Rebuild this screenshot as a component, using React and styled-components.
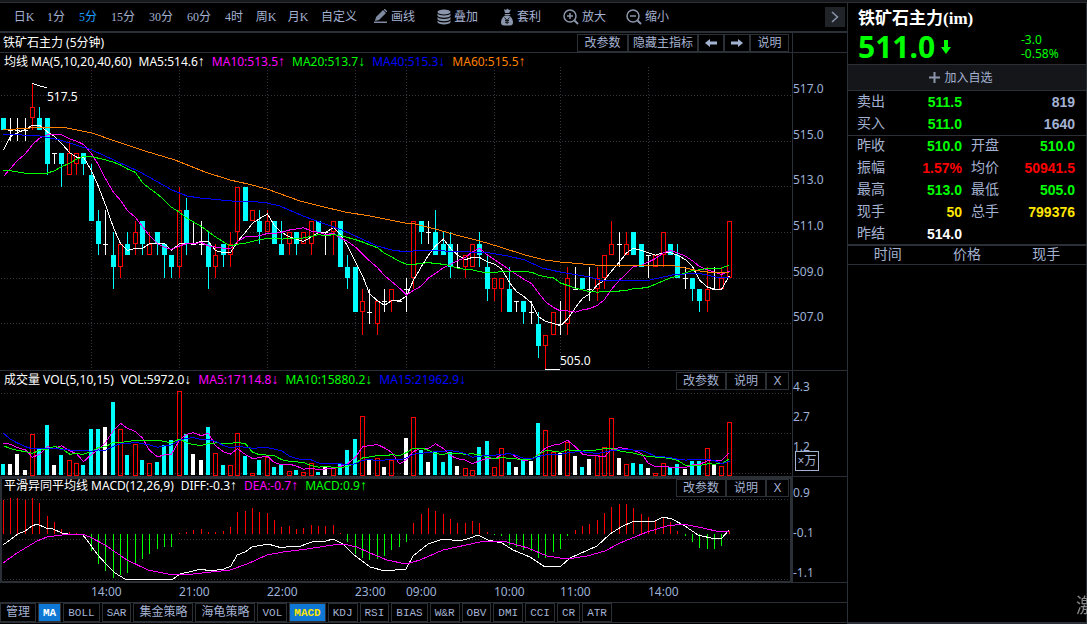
import React from "react";
import styled, { createGlobalStyle } from "styled-components";

const LINE = "#2b3037";
const TEXT = "#a4b2d2";
const UP = "#ff0000";
const DOWN = "#00ffff";
const COLORS = { r: UP, c: DOWN, w: "#ffffff" };

const periods = ["日K", "1分", "5分", "15分", "30分", "60分", "4时", "周K", "月K", "自定义"];
const tabs = ["管理", "MA", "BOLL", "SAR", "集金策略", "海龟策略", "VOL", "MACD", "KDJ", "RSI", "BIAS", "W&R", "OBV", "DMI", "CCI", "CR", "ATR"];

const times = [
    [91, "14:00"], [179, "21:00"], [267, "22:00"], [355, "23:00"],
    [406, "09:00"], [494, "10:00"], [560, "11:00"], [648, "14:00"],
];

// type, high, body top, body bottom, low - in ticks of 0.5 below 517.5
const candles = [
    ["c", 3, 3, 4, 4], ["w", 3, 4, 4, 5], ["w", 3, 4, 4, 5], ["w", 3, 4, 4, 5], ["r", 0, 2, 3, 4],
    ["c", 2, 3, 4, 4], ["c", 3, 3, 7, 8], ["w", 6, 6, 6, 7], ["c", 6, 6, 7, 9], ["r", 5, 6, 8, 8],
    ["r", 6, 6, 7, 8], ["c", 6, 6, 7, 8], ["c", 7, 8, 12, 12], ["c", 11, 12, 14, 15], ["w", 11, 14, 14, 15],
    ["c", 13, 15, 16, 18], ["r", 14, 14, 16, 17], ["c", 13, 14, 15, 15], ["r", 12, 13, 14, 15], ["c", 12, 12, 14, 15],
    ["r", 13, 14, 15, 15], ["c", 13, 13, 14, 15], ["c", 14, 14, 15, 17], ["c", 15, 15, 16, 17], ["r", 9, 11, 16, 17],
    ["c", 10, 11, 14, 15], ["w", 12, 14, 14, 14], ["w", 12, 14, 14, 15], ["c", 13, 14, 16, 18], ["r", 14, 15, 16, 17],
    ["c", 14, 14, 15, 16], ["r", 13, 14, 15, 16], ["r", 9, 9, 13, 14], ["c", 9, 9, 12, 12], ["r", 11, 11, 12, 12],
    ["c", 11, 12, 13, 14], ["r", 11, 12, 13, 13], ["c", 12, 12, 14, 14], ["c", 12, 14, 15, 15], ["r", 13, 13, 14, 15],
    ["c", 13, 13, 14, 15], ["r", 13, 13, 14, 14], ["r", 12, 12, 14, 15], ["c", 12, 12, 13, 13], ["w", 13, 13, 13, 15],
    ["r", 12, 12, 13, 15], ["c", 12, 12, 16, 16], ["c", 15, 16, 17, 18], ["c", 16, 16, 20, 20], ["r", 18, 19, 20, 22],
    ["w", 18, 20, 20, 21], ["r", 19, 19, 21, 22], ["w", 18, 19, 19, 20], ["r", 18, 18, 19, 20], ["w", 19, 19, 19, 19],
    ["w", 17, 18, 18, 20], ["r", 12, 12, 17, 18], ["c", 12, 12, 13, 14], ["w", 12, 13, 13, 14], ["c", 11, 13, 15, 15],
    ["c", 13, 14, 15, 15], ["c", 13, 14, 16, 17], ["w", 14, 16, 16, 16], ["r", 15, 15, 16, 17], ["r", 14, 14, 16, 16],
    ["c", 13, 14, 15, 16], ["c", 15, 16, 18, 19], ["r", 17, 17, 18, 19], ["r", 17, 17, 18, 20], ["c", 16, 18, 20, 20],
    ["w", 19, 19, 19, 20], ["c", 19, 19, 20, 21], ["w", 19, 20, 20, 21], ["c", 20, 21, 23, 24], ["r", 22, 22, 23, 25],
    ["r", 20, 20, 22, 22], ["w", 19, 21, 21, 22], ["r", 16, 17, 21, 22], ["w", 16, 18, 18, 18], ["c", 17, 17, 18, 18],
    ["w", 16, 18, 18, 19], ["r", 16, 17, 18, 19], ["r", 15, 15, 17, 18], ["r", 12, 14, 15, 15], ["w", 13, 14, 14, 16],
    ["r", 13, 14, 15, 15], ["c", 13, 13, 15, 15], ["c", 14, 14, 16, 16], ["w", 15, 15, 15, 17], ["r", 15, 15, 16, 16],
    ["r", 13, 13, 15, 16], ["c", 14, 14, 15, 15], ["c", 14, 15, 17, 17], ["w", 16, 17, 17, 18], ["c", 17, 17, 18, 19],
    ["c", 18, 18, 19, 20], ["r", 16, 18, 19, 20], ["w", 16, 18, 18, 18], ["r", 16, 17, 18, 18], ["r", 12, 12, 17, 17],
];

const volumes = [
    33, 33, 63, 15, 122, 78, 150, 30, 60, 45, 35, 30, 138, 138, 144, 219, 137, 60, 93, 45,
    35, 39, 90, 105, 253, 123, 63, 45, 144, 65, 30, 29, 125, 57, 5, 45, 53, 24, 30, 11,
    15, 8, 35, 9, 24, 25, 36, 75, 108, 176, 47, 50, 24, 45, 0, 111, 173, 75, 39, 69,
    39, 69, 27, 20, 14, 84, 102, 23, 80, 39, 24, 48, 42, 156, 134, 68, 66, 98, 57, 24,
    48, 59, 83, 170, 51, 32, 36, 33, 21, 5, 35, 23, 33, 18, 42, 42, 80, 30, 26, 158,
];

const macd = [
    103, 109, 109, 103, 109, 94, 55, 37, 16, 7, 4, -8, -50, -90, -110, -131, -122, -116, -90, -74,
    -60, -44, -38, -38, 1, 7, 13, 16, 7, 7, 10, 22, 67, 70, 79, 67, 64, 43, 22, 25,
    16, 19, 28, 25, 25, 28, 1, -23, -59, -71, -78, -74, -65, -47, -38, -23, 34, 61, 79, 70,
    61, 46, 34, 34, 40, 34, 7, -2, -5, -32, -38, -47, -50, -71, -71, -53, -44, -5, 13, 25,
    31, 43, 64, 82, 91, 91, 79, 61, 52, 43, 52, 37, 10, -5, -23, -41, -44, -44, -35, 10,
];

const ma40 = "3,134 40,136 60,140 92,150 140,172 172,190 187,196 200,198 232,201 248,201 267,203 280,206 303,216 325,224 342,230 362,239 377,246 392,250 407,252 420,250 445,251 470,252 490,253 508,256 525,260 542,268 560,272 590,277 600,280 625,281 650,280 672,275 698,273 720,278 729,277";
const ma60 = "3,130 30,128 62,127 92,133 115,141 145,151 175,160 205,172 230,180 248,184 267,189 300,201 320,206 345,212 370,216 395,221 405,223 415,224 435,229 460,236 480,241 500,247 525,255 545,260 560,262 595,265 620,265 650,266 670,265 685,268 700,271 715,273 729,272";
const diff = "3,545 18,534 25,531 32,526 37,524 46,528 53,529 62,533 68,534 82,534 87,540 97,554 106,564 115,573 125,579 173,579 180,574 193,571 201,569 210,571 224,569 231,566 237,555 245,552 252,547 268,544 282,548 290,546 298,547 312,542 326,541 333,539 343,544 353,554 370,567 385,571 406,569 413,556 428,544 443,539 460,541 470,538 478,535 488,540 502,543 513,550 530,557 545,567 561,566 570,558 597,546 610,534 621,527 632,522 655,521 663,517 672,519 685,526 698,535 715,539 722,538 729,530";
const dea = "3,563 17,553 37,541 47,537 62,535 82,534 90,537 105,545 127,560 148,570 173,575 193,574 230,570 247,564 267,555 283,552 307,549 333,545 343,544 357,547 370,553 387,560 406,564 420,560 443,550 480,542 503,541 528,548 547,556 567,559 587,556 605,551 620,543 647,532 667,526 683,524 703,528 720,532 729,531";

const barX = (i) => Math.floor(3.3 + (726 / 99) * i);
const tickY = (k) => Math.round(84.1 + 11.4 * k);

// seed holds the averages of the bars which reach back before the first one
function average(values, n, seed) {
    return values.map((v, i) => {
        if (i < n - 1) return seed[i];
        return values.slice(i - n + 1, i + 1).reduce((a, b) => a + b, 0) / n;
    });
}

function toPoints(values, scale) {
    return values.map((v, i) => `${barX(i) + 0.5},${scale(v)}`).join(" ");
}

const closes = candles.map(([type, , top, bottom]) => (type === "r" ? top : bottom));
const priceY = (k) => 84.1 + 11.4 * k;
const volumeY = (v) => 475 - v / 3;

const priceLines = [
    ["#ffffff", toPoints(average(closes, 5, [5.8, 4.6, 4.26, 3.97]), priceY)],
    ["#ff00ff", toPoints(average(closes, 10, [8.1, 7.4, 6.7, 6.1, 5.3, 4.75, 4.45, 4.4, 4.45]), priceY)],
    ["#00ff00", toPoints(average(closes, 20, [7.55, 7.6, 7.7, 7.82, 7.82, 7.82, 7.8, 7.6, 7.25, 6.95, 6.6, 6.35, 6.37, 6.5, 6.65, 6.85, 7.1, 7.45, 7.75]), priceY)],
    ["#0000ff", ma40],
    ["#ff8000", ma60],
];

const volumeLines = [
    ["#ff00ff", toPoints(average(volumes, 5, [96, 92, 82, 75]), volumeY)],
    ["#00ff00", toPoints(average(volumes, 10, [88, 79, 74, 70, 65, 74, 78, 86, 80]), volumeY)],
    ["#0000ff", toPoints(average(volumes, 15, [125, 107, 96, 85, 78, 79, 80, 80, 77, 75, 74, 74, 71, 75]), volumeY)],
];

const quotes = [
    [["卖出", "511.5", "#00ff00"], ["", "819", TEXT]],
    [["买入", "511.0", "#00ff00"], ["", "1640", TEXT]],
    [["昨收", "510.0", "#00ff00"], ["开盘", "510.0", "#00ff00"]],
    [["振幅", "1.57%", "#ff0000"], ["均价", "50941.5", "#ff0000"]],
    [["最高", "513.0", "#00ff00"], ["最低", "505.0", "#00ff00"]],
    [["现手", "50", "#ffe600"], ["总手", "799376", "#ffe600"]],
    [["昨结", "514.0", "#ffffff"], ["", "", TEXT]],
];

function Lines({ lines }) {
    return lines.map(([color, points]) => (
        <polyline key={color} points={points} fill="none" stroke={color} />
    ));
}

function GridRows({ rows }) {
    return rows.map((y) => (
        <line key={y} x1="1" x2="100%" y1={y + 0.5} y2={y + 0.5} stroke="#34343c" strokeDasharray="1 2" />
    ));
}

function Candle({ index, data }) {
    const [type, high, top, bottom, low] = data;
    const x = barX(index);
    const color = COLORS[type];
    const t = tickY(top);
    const b = tickY(bottom);

    return (
        <g stroke={color} fill="none">
            <path d={`M${x + 0.5} ${tickY(high)}V${t}M${x + 0.5} ${b}V${tickY(low)}`} />
            {type === "r" && <rect x={x - 1.5} y={t + 0.5} width="4" height={b - t - 1} />}
            {type === "c" && <rect x={x - 2} y={t} width="5" height={b - t} fill={color} stroke="none" />}
            {type === "w" && <path d={`M${x - 2} ${t + 0.5}h5`} />}
        </g>
    );
}

function PriceChart() {
    return (
        <Plot $height={301} shapeRendering="crispEdges">
            <g transform="translate(0 -69)">
                <GridRows rows={[95, 141, 186, 232, 278, 323]} />
                {times.map(([x]) => (
                    <line key={x} x1={x + 0.5} x2={x + 0.5} y1="67" y2="370" stroke="#34343c" strokeDasharray="1 2" />
                ))}
                {candles.map((data, i) => <Candle key={i} index={i} data={data} />)}
                <Lines lines={priceLines} />
                <path d="M32 83.5L47 88M545 369.5h15" stroke="#ffffff" fill="none" />
                <Mark x="47" y="101">517.5</Mark>
                <Mark x="560" y="365">505.0</Mark>
            </g>
        </Plot>
    );
}

function VolumeChart() {
    return (
        <Plot $height={86} shapeRendering="crispEdges">
            <g transform="translate(0 -390)">
                <GridRows rows={[393, 433, 473]} />
                {volumes.map((v, i) => {
                    const type = candles[i][0];
                    const h = Math.round(v / 3);
                    if (type === "r") {
                        return <rect key={i} x={barX(i) - 1.5} y={475.5 - h} width="4" height={h} fill="none" stroke={UP} />;
                    }
                    return <rect key={i} x={barX(i) - 2} y={475 - h} width="4" height={h} fill={COLORS[type]} />;
                })}
                <Lines lines={volumeLines} />
            </g>
        </Plot>
    );
}

function MacdChart() {
    return (
        <Plot $height={83} shapeRendering="crispEdges">
            <g transform="translate(0 -497)">
                <GridRows rows={[499, 539, 579]} />
                {macd.map((v, i) => (
                    <path key={i} d={`M${barX(i) + 0.5} 533.5v${Math.round(-v / 3) || -1}`} stroke={v > 0 ? UP : "#00ff00"} />
                ))}
                <Lines lines={[["#ffffff", diff], ["#ff00ff", dea]]} />
            </g>
        </Plot>
    );
}

function Axis({ height, labels }) {
    return (
        <Plot $height={height}>
            {labels.map(([y, label]) => <AxisText key={label} x="0" y={y}>{label}</AxisText>)}
        </Plot>
    );
}

function Legend({ items }) {
    return (
        <LegendRow>
            {items.map(([text, color, arrow]) => (
                <LegendItem key={text} $color={color}>{text}{arrow && <Arrow>{arrow}</Arrow>}</LegendItem>
            ))}
        </LegendRow>
    );
}

function PaneButtons() {
    return (
        <ButtonGroup>
            <SmallButton $width={50}>改参数</SmallButton>
            <SmallButton $width={40}>说明</SmallButton>
            <SmallButton $width={23}>X</SmallButton>
        </ButtonGroup>
    );
}

function PencilIcon() {
    return (
        <svg width="14" height="16" viewBox="0 0 14 16" fill="#7f899f">
            <path d="M1 12l1-4 7-7 3 3-7 7zM10 0l1 0 2 2v1l-1 0-2-2z" />
            <path d="M0 12.500h13v1.500H0z" />
        </svg>
    );
}

function StackIcon() {
    return (
        <svg width="14" height="16" viewBox="0 0 14 16" fill="#8b95ab">
            <ellipse cx="7" cy="3" rx="6.500" ry="2.500" />
            <path d="M.5 4.500c1 2.500 12 2.500 13 0v2.300c-1 2.500-12 2.500-13 0zM.5 8c1 2.500 12 2.500 13 0v2.300c-1 2.500-12 2.500-13 0zM.5 11.500c1 2.500 12 2.500 13 0v1.800c-1 2.800-12 2.800-13 0z" />
        </svg>
    );
}

function BagIcon() {
    return (
        <svg width="14" height="18" viewBox="0 0 14 18" fill="#8b95ab">
            <path d="M4 1l2 1 1.500-1.500L9 2l2-.5L9 5H5zM5 6h5l.5 1H4.500zM5 7.500h4c3 2 4 4.500 4 7 0 2-1 3-3 3H4c-2 0-3-1-3-3 0-2.500 1-5 4-7z" />
            <path d="M4.500 9.500L7 12.500l2.500-3M7 12.500V16M5 12.500h4M5 14.300h4" stroke="#101318" fill="none" />
        </svg>
    );
}

function ZoomIcon({ plus }) {
    return (
        <svg width="16" height="16" viewBox="0 0 16 16" fill="none" stroke="#8b95ab" strokeWidth="1.500">
            <circle cx="7" cy="7" r="6" />
            <path d="M11.500 11.500L15 15" strokeWidth="2" />
            <path d={plus ? "M4 7h6M7 4v6" : "M4 7h6"} />
        </svg>
    );
}

function MoveIcon({ right }) {
    return (
        <svg width="12" height="8" viewBox="0 0 12 8" fill={TEXT}>
            <path d={right ? "M12 4L7 0v2.500H0v3h7V8z" : "M0 4l5-4v2.500h7v3H5V8z"} />
        </svg>
    );
}

const tools = [
    ["画线", <PencilIcon />], ["叠加", <StackIcon />], ["套利", <BagIcon />],
    ["放大", <ZoomIcon plus />], ["缩小", <ZoomIcon />],
];

function Toolbar() {
    return (
        <ToolbarRow>
            {periods.map((name) => (
                <PeriodButton key={name} $width={name === "自定义" ? 50 : 26 + 6 * (name.length - 1)} $active={name === "5分"}>
                    {name}
                </PeriodButton>
            ))}
            <Tools>
                {tools.map(([name, icon]) => (
                    <ToolButton key={name}>{icon}{name}</ToolButton>
                ))}
            </Tools>
            <MoreButton aria-label="更多">
                <svg width="8" height="12" viewBox="0 0 8 12" fill="none" stroke="#8b95ab" strokeWidth="1.500">
                    <path d="M1 1l5.500 5L1 11" />
                </svg>
            </MoreButton>
        </ToolbarRow>
    );
}

function QuotePanel() {
    return (
        <Side>
            <Summary>
                <Name>铁矿石主力(im)</Name>
                <PriceRow>
                    <Price>511.0</Price>
                    <svg width="10" height="14" viewBox="0 0 10 14" fill="#00ff00">
                        <path d="M3 0h4v7h3l-5 7-5-7h3z" />
                    </svg>
                    <Change>
                        <span>-3.0</span>
                        <span>-0.58%</span>
                    </Change>
                </PriceRow>
            </Summary>
            <AddButton>
                <svg width="11" height="11" viewBox="0 0 11 11" stroke="#8b95ab" strokeWidth="2">
                    <path d="M5.500 0v11M0 5.500h11" />
                </svg>
                加入自选
            </AddButton>
            <QuoteTable>
                <colgroup>
                    <LabelCol />
                    <ValueCol />
                    <LabelCol />
                    <col />
                </colgroup>
                <tbody>
                    {quotes.map(([left, right], i) => (
                        <QuoteRow key={left[0]} $line={i === 2}>
                            <Label scope="row">{left[0]}</Label>
                            <Value $color={left[2]}>{left[1]}</Value>
                            <Label as={right[0] ? "th" : "td"}>{right[0]}</Label>
                            <Value $color={right[2]}>{right[1]}</Value>
                        </QuoteRow>
                    ))}
                </tbody>
            </QuoteTable>
            <TradeTable>
                <thead>
                    <tr><th>时间</th><th>价格</th><th>现手</th></tr>
                </thead>
            </TradeTable>
        </Side>
    );
}

function App() {
    return (
        <Page>
            <GlobalStyle />
            <TopStrip />
            <Main>
                <Toolbar />
                <Charts>
                    <TitleRow>
                        <Title>铁矿石主力 (5分钟)</Title>
                        <ButtonGroup>
                            <SmallButton $width={51}>改参数</SmallButton>
                            <SmallButton $width={70}>隐藏主指标</SmallButton>
                            <SmallButton $width={26} aria-label="左移"><MoveIcon /></SmallButton>
                            <SmallButton $width={26} aria-label="右移"><MoveIcon right /></SmallButton>
                            <SmallButton $width={39}>说明</SmallButton>
                        </ButtonGroup>
                    </TitleRow>
                    <AxisCell />

                    <Pane>
                        <PaneHeader $height={16}>
                            <Legend items={[
                                ["均线 MA(5,10,20,40,60)", "#ffffff"],
                                ["MA5:514.6", "#ffffff", "↑"],
                                ["MA10:513.5", "#ff00ff", "↑"],
                                ["MA20:513.7", "#00ff00", "↓"],
                                ["MA40:515.3", "#0000ff", "↓"],
                                ["MA60:515.5", "#ff8000", "↑"],
                            ]} />
                        </PaneHeader>
                        <PriceChart />
                    </Pane>
                    <AxisCell>
                        <Axis height={317} labels={[[40, "517.0"], [86, "515.0"], [131, "513.0"], [177, "511.0"], [223, "509.0"], [268, "507.0"]]} />
                    </AxisCell>

                    <Pane>
                        <PaneHeader $height={19}>
                            <Legend items={[
                                ["成交量 VOL(5,10,15)", "#ffffff"],
                                ["VOL:5972.0", "#ffffff", "↓"],
                                ["MA5:17114.8", "#ff00ff", "↓"],
                                ["MA10:15880.2", "#00ff00", "↓"],
                                ["MA15:21962.9", "#0000ff", "↓"],
                            ]} />
                            <PaneButtons />
                        </PaneHeader>
                        <VolumeChart />
                    </Pane>
                    <AxisCell>
                        <Axis height={105} labels={[[20, "4.3"], [50, "2.7"], [80, "1.2"]]} />
                        <Unit>×万</Unit>
                    </AxisCell>

                    <Pane $selected>
                        <PaneHeader $height={20}>
                            <Legend items={[
                                ["平滑异同平均线 MACD(12,26,9)", "#ffffff"],
                                ["DIFF:-0.3", "#ffffff", "↑"],
                                ["DEA:-0.7", "#ff00ff", "↑"],
                                ["MACD:0.9", "#00ff00", "↑"],
                            ]} />
                            <PaneButtons />
                        </PaneHeader>
                        <MacdChart />
                    </Pane>
                    <AxisCell>
                        <Axis height={105} labels={[[20, "0.9"], [60, "-0.1"], [100, "-1.1"]]} />
                    </AxisCell>
                </Charts>
                <TimeRow>
                    <Plot $height={19}>
                        {times.map(([x, label]) => <AxisText key={x} x={x} y="13">{label}</AxisText>)}
                    </Plot>
                </TimeRow>
                <TabRow>
                    {tabs.map((name) => (
                        <Tab key={name} $wide={/[^A-Z&]/.test(name)} $active={name === "MA" || name === "MACD"} $color={name === "MACD" ? "#ffe600" : undefined}>
                            {name}
                        </Tab>
                    ))}
                </TabRow>
            </Main>
            <QuotePanel />
            <Watermark>激</Watermark>
        </Page>
    );
}

export default App;

const GlobalStyle = createGlobalStyle`
    * {
        box-sizing: border-box;
    }

    body {
        margin: 0;
        background: #000;
        overflow: hidden;
    }

    button {
        margin: 0;
        padding: 0;
        border: 0;
        background: none;
        color: inherit;
        font: inherit;
        cursor: pointer;
    }
`;

const Page = styled.div`
    display: grid;
    grid-template-columns: minmax(0, 1fr) 240px;
    grid-template-rows: auto 1fr;
    min-height: 100vh;
    background: #000;
    color: ${TEXT};
    font-family: "Liberation Serif", "Noto Sans CJK SC", sans-serif;
    font-size: 12px;
    line-height: 16px;
`;

const TopStrip = styled.div`
    grid-column: 1 / -1;
    height: 3px;
    background: #16181b;
    border-bottom: 1px solid ${LINE};
`;

const Main = styled.main`
    display: flex;
    flex-direction: column;
`;

const ToolbarRow = styled.div`
    display: flex;
    align-items: center;
    height: 30px;
    padding: 0 2px 0 8px;
    border-bottom: 2px solid ${LINE};
`;

const PeriodButton = styled.button`
    width: ${(props) => props.$width}px;
    line-height: 18px;
    color: ${(props) => (props.$active ? "#1e9fff" : TEXT)};
`;

const Tools = styled.div`
    display: flex;
    flex: 1;
    padding-left: 10px;
`;

const ToolButton = styled.button`
    display: flex;
    align-items: center;
    gap: 3px;
    width: 63px;
`;

const MoreButton = styled.button`
    display: flex;
    align-items: center;
    justify-content: center;
    width: 20px;
    height: 20px;
    background: #202328;
`;

const Charts = styled.div`
    display: grid;
    grid-template-columns: minmax(0, 1fr) 55px;
`;

const TitleRow = styled.div`
    display: flex;
    justify-content: space-between;
    align-items: flex-end;
    height: 20px;
    padding: 0 3px;
    border-bottom: 1px solid ${LINE};
`;

const Title = styled.h1`
    margin: 0;
    color: #fff;
    font-family: "Noto Sans", "Noto Sans CJK SC", sans-serif;
    font-size: 12px;
    font-weight: 400;
    line-height: 18px;
`;

const ButtonGroup = styled.div`
    display: flex;
`;

const SmallButton = styled.button`
    display: flex;
    align-items: center;
    justify-content: center;
    width: ${(props) => props.$width}px;
    height: 18px;
    border: 1px solid ${LINE};
    color: ${TEXT};
    font-family: "Liberation Sans", "Noto Sans CJK SC", sans-serif;
    white-space: nowrap;
`;

const Pane = styled.section`
    border-bottom: ${(props) => (props.$selected ? 0 : 1)}px solid ${LINE};
    padding-bottom: ${(props) => (props.$selected ? 3 : 0)}px;
    box-shadow: ${(props) => (props.$selected ? `inset 0 0 0 2px ${LINE}` : "none")};
`;

const PaneHeader = styled.div`
    display: flex;
    justify-content: space-between;
    align-items: flex-end;
    height: ${(props) => props.$height}px;
    padding: 0 3px 0 4px;
`;

const LegendRow = styled.div`
    display: flex;
    gap: 7px;
    font-family: "Noto Sans", "Noto Sans CJK SC", sans-serif;
    white-space: nowrap;
    line-height: 18px;
    align-self: flex-start;
`;

const LegendItem = styled.span`
    color: ${(props) => props.$color};
`;

const Arrow = styled.span`
    font-family: "Liberation Sans", sans-serif;
    font-size: 14px;
    line-height: 14px;
`;

const Plot = styled.svg`
    display: block;
    width: 100%;
    height: ${(props) => props.$height}px;
    overflow: visible;
`;

const AxisCell = styled.div`
    position: relative;
    border-left: 1px solid ${LINE};
    border-bottom: 1px solid ${LINE};
`;

const AxisText = styled.text`
    fill: #9db0d6;
    font-family: "Noto Sans", sans-serif;
    font-size: 12px;
`;

const Mark = styled.text`
    fill: #fff;
    font-family: "Noto Sans", sans-serif;
    font-size: 12px;
`;

// sits over the lowest label of the volume axis
const Unit = styled.span`
    position: absolute;
    left: 2px;
    bottom: 5px;
    width: 24px;
    height: 20px;
    border: 1px solid ${TEXT};
    background: #000;
    font-family: "Noto Sans", "Noto Sans CJK SC", sans-serif;
    line-height: 18px;
    text-align: center;
`;

const TimeRow = styled.div`
    border-bottom: 1px solid ${LINE};
`;

const TabRow = styled.div`
    display: flex;
    border-bottom: 1px solid ${LINE};
    height: 20px;
`;

const Tab = styled.button`
    padding: 0 ${(props) => (props.$wide ? 5 : 4)}px;
    margin-right: 2px;
    border: 1px solid ${LINE};
    background: ${(props) => (props.$active ? "#0f78d4" : "#000")};
    color: ${(props) => props.$color || (props.$active ? "#fff" : TEXT)};
    font-family: "Liberation Mono", "Noto Sans CJK SC", monospace;
    font-size: ${(props) => (props.$wide ? 12 : 11)}px;
    font-weight: ${(props) => (props.$active ? 700 : 400)};
    white-space: nowrap;
`;

const Side = styled.aside`
    display: flex;
    flex-direction: column;
    border: 1px solid ${LINE};
    border-top: 0;
    border-bottom-width: 2px;
`;

const Summary = styled.div`
    height: 61px;
    padding: 5px 10px 0;
`;

const Name = styled.h2`
    margin: 0;
    color: #fff;
    font-size: 17px;
    line-height: 22px;
`;

const PriceRow = styled.div`
    display: flex;
    align-items: center;
    gap: 6px;
    height: 34px;
    color: #00ff00;
    font-family: "Noto Sans", sans-serif;
`;

const Price = styled.strong`
    font-size: 30px;
    line-height: 34px;
`;

const Change = styled.div`
    display: flex;
    flex-direction: column;
    width: 55px;
    margin-left: auto;
    line-height: 14px;
`;

const AddButton = styled.button`
    display: flex;
    align-items: center;
    justify-content: center;
    gap: 4px;
    height: 27px;
    padding-right: 12px;
    border-top: 1px solid ${LINE};
    border-bottom: 1px solid ${LINE};
    background: #141619;
    color: ${TEXT};
`;

const QuoteTable = styled.table`
    width: 100%;
    border-collapse: collapse;
    border-bottom: 2px solid ${LINE};
    table-layout: fixed;
    font-size: 14px;
    line-height: 20px;
`;

const LabelCol = styled.col`
    width: 45px;
`;

const ValueCol = styled.col`
    width: 69px;
`;

const QuoteRow = styled.tr`
    height: 22px;
    border-top: ${(props) => (props.$line ? `1px solid ${LINE}` : 0)};
`;

const Label = styled.th`
    padding: 0 0 0 9px;
    font-weight: 400;
    text-align: left;
    white-space: nowrap;
`;

const Value = styled.td`
    padding: 0;
    color: ${(props) => props.$color};
    font-family: "Liberation Sans", sans-serif;
    font-weight: 700;
    text-align: right;

    &:last-child {
        padding-right: 11px;
    }
`;

const TradeTable = styled.table`
    width: 100%;
    border-collapse: collapse;
    border-bottom: 1px solid ${LINE};
    table-layout: fixed;
    font-size: 14px;
    line-height: 18px;

    th {
        padding: 0;
        font-weight: 400;
    }
`;

const Watermark = styled.div`
    position: fixed;
    right: -9px;
    bottom: 6px;
    color: #85878a;
    font-family: "Noto Sans CJK SC", sans-serif;
    font-size: 20px;
    line-height: 26px;
`;
